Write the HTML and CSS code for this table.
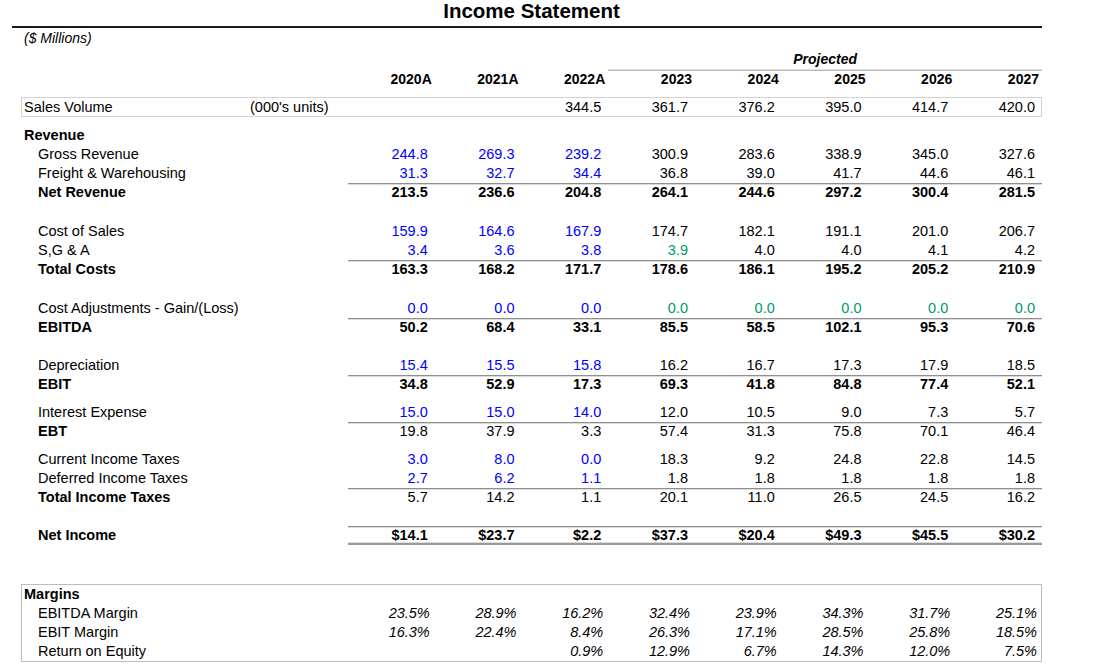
FILE: index.html
```html
<!DOCTYPE html>
<html>
<head>
<meta charset="utf-8">
<link rel="stylesheet" href="styles.css">
</head>
<body>
<div class="page">
  <div class="title">Income Statement</div>
  <div class="units">($ Millions)</div>
  <div class="table">
    <div class="row proj-row">
      <div class="projected">Projected</div>
    </div>
    <div class="row hdr">
      <div></div>
      <div class="h">2020A</div><div class="h">2021A</div><div class="h">2022A</div>
      <div class="h">2023</div><div class="h">2024</div><div class="h">2025</div><div class="h">2026</div><div class="h">2027</div>
    </div>
    <div class="row boxed vol">
      <div class="lbl"><span class="vol-name">Sales Volume</span><span>(000's units)</span></div>
      <div class="n"></div><div class="n"></div><div class="n">344.5</div>
      <div class="n">361.7</div><div class="n">376.2</div><div class="n">395.0</div><div class="n">414.7</div><div class="n">420.0</div>
    </div>

    <div class="row first">
      <div class="lbl bold">Revenue</div>
    </div>
    <div class="row">
      <div class="lbl ind">Gross Revenue</div>
      <div class="n b">244.8</div><div class="n b">269.3</div><div class="n b">239.2</div>
      <div class="n">300.9</div><div class="n">283.6</div><div class="n">338.9</div><div class="n">345.0</div><div class="n">327.6</div>
    </div>
    <div class="row">
      <div class="lbl ind">Freight &amp; Warehousing</div>
      <div class="n b">31.3</div><div class="n b">32.7</div><div class="n b">34.4</div>
      <div class="n">36.8</div><div class="n">39.0</div><div class="n">41.7</div><div class="n">44.6</div><div class="n">46.1</div>
    </div>
    <div class="row total bold">
      <div class="lbl ind">Net Revenue</div>
      <div class="n">213.5</div><div class="n">236.6</div><div class="n">204.8</div>
      <div class="n">264.1</div><div class="n">244.6</div><div class="n">297.2</div><div class="n">300.4</div><div class="n">281.5</div>
    </div>

    <div class="sp20"></div>
    <div class="row">
      <div class="lbl ind">Cost of Sales</div>
      <div class="n b">159.9</div><div class="n b">164.6</div><div class="n b">167.9</div>
      <div class="n">174.7</div><div class="n">182.1</div><div class="n">191.1</div><div class="n">201.0</div><div class="n">206.7</div>
    </div>
    <div class="row">
      <div class="lbl ind">S,G &amp; A</div>
      <div class="n b">3.4</div><div class="n b">3.6</div><div class="n b">3.8</div>
      <div class="n g">3.9</div><div class="n">4.0</div><div class="n">4.0</div><div class="n">4.1</div><div class="n">4.2</div>
    </div>
    <div class="row total bold">
      <div class="lbl ind">Total Costs</div>
      <div class="n">163.3</div><div class="n">168.2</div><div class="n">171.7</div>
      <div class="n">178.6</div><div class="n">186.1</div><div class="n">195.2</div><div class="n">205.2</div><div class="n">210.9</div>
    </div>

    <div class="sp20"></div>
    <div class="row">
      <div class="lbl ind">Cost Adjustments - Gain/(Loss)</div>
      <div class="n b">0.0</div><div class="n b">0.0</div><div class="n b">0.0</div>
      <div class="n g">0.0</div><div class="n g">0.0</div><div class="n g">0.0</div><div class="n g">0.0</div><div class="n g">0.0</div>
    </div>
    <div class="row total bold">
      <div class="lbl ind">EBITDA</div>
      <div class="n">50.2</div><div class="n">68.4</div><div class="n">33.1</div>
      <div class="n">85.5</div><div class="n">58.5</div><div class="n">102.1</div><div class="n">95.3</div><div class="n">70.6</div>
    </div>

    <div class="sp19"></div>
    <div class="row">
      <div class="lbl ind">Depreciation</div>
      <div class="n b">15.4</div><div class="n b">15.5</div><div class="n b">15.8</div>
      <div class="n">16.2</div><div class="n">16.7</div><div class="n">17.3</div><div class="n">17.9</div><div class="n">18.5</div>
    </div>
    <div class="row total bold">
      <div class="lbl ind">EBIT</div>
      <div class="n">34.8</div><div class="n">52.9</div><div class="n">17.3</div>
      <div class="n">69.3</div><div class="n">41.8</div><div class="n">84.8</div><div class="n">77.4</div><div class="n">52.1</div>
    </div>

    <div class="sp9"></div>
    <div class="row">
      <div class="lbl ind">Interest Expense</div>
      <div class="n b">15.0</div><div class="n b">15.0</div><div class="n b">14.0</div>
      <div class="n">12.0</div><div class="n">10.5</div><div class="n">9.0</div><div class="n">7.3</div><div class="n">5.7</div>
    </div>
    <div class="row total">
      <div class="lbl ind bold">EBT</div>
      <div class="n">19.8</div><div class="n">37.9</div><div class="n">3.3</div>
      <div class="n">57.4</div><div class="n">31.3</div><div class="n">75.8</div><div class="n">70.1</div><div class="n">46.4</div>
    </div>

    <div class="sp9"></div>
    <div class="row">
      <div class="lbl ind">Current Income Taxes</div>
      <div class="n b">3.0</div><div class="n b">8.0</div><div class="n b">0.0</div>
      <div class="n">18.3</div><div class="n">9.2</div><div class="n">24.8</div><div class="n">22.8</div><div class="n">14.5</div>
    </div>
    <div class="row">
      <div class="lbl ind">Deferred Income Taxes</div>
      <div class="n b">2.7</div><div class="n b">6.2</div><div class="n b">1.1</div>
      <div class="n">1.8</div><div class="n">1.8</div><div class="n">1.8</div><div class="n">1.8</div><div class="n">1.8</div>
    </div>
    <div class="row total">
      <div class="lbl ind bold">Total Income Taxes</div>
      <div class="n">5.7</div><div class="n">14.2</div><div class="n">1.1</div>
      <div class="n">20.1</div><div class="n">11.0</div><div class="n">26.5</div><div class="n">24.5</div><div class="n">16.2</div>
    </div>

    <div class="sp19"></div>
    <div class="row net bold">
      <div class="lbl ind">Net Income</div>
      <div class="n">$14.1</div><div class="n">$23.7</div><div class="n">$2.2</div>
      <div class="n">$37.3</div><div class="n">$20.4</div><div class="n">$49.3</div><div class="n">$45.5</div><div class="n">$30.2</div>
    </div>

    <div class="margins">
      <div class="row">
        <div class="lbl bold">Margins</div>
      </div>
      <div class="row">
        <div class="lbl ind">EBITDA Margin</div>
        <div class="n p">23.5%</div><div class="n p">28.9%</div><div class="n p">16.2%</div>
        <div class="n p">32.4%</div><div class="n p">23.9%</div><div class="n p">34.3%</div><div class="n p">31.7%</div><div class="n p">25.1%</div>
      </div>
      <div class="row">
        <div class="lbl ind">EBIT Margin</div>
        <div class="n p">16.3%</div><div class="n p">22.4%</div><div class="n p">8.4%</div>
        <div class="n p">26.3%</div><div class="n p">17.1%</div><div class="n p">28.5%</div><div class="n p">25.8%</div><div class="n p">18.5%</div>
      </div>
      <div class="row">
        <div class="lbl ind">Return on Equity</div>
        <div class="n p"></div><div class="n p"></div><div class="n p">0.9%</div>
        <div class="n p">12.9%</div><div class="n p">6.7%</div><div class="n p">14.3%</div><div class="n p">12.0%</div><div class="n p">7.5%</div>
      </div>
    </div>
  </div>
</div>
</body>
</html>
```

FILE: styles.css
```css
html, body {
  margin: 0;
  padding: 0;
  background: #ffffff;
}

body {
  font-family: "Liberation Sans", Arial, sans-serif;
  font-size: 14.5px;
  color: #000000;
}

.page {
  padding-left: 12px;
  width: 1030px;
}

.title {
  font-size: 20.5px;
  font-weight: bold;
  line-height: 22px;
  height: 22px;
  padding-bottom: 4px;
  padding-left: 9px;
  text-align: center;
  border-bottom: 2px solid #1a1a1a;
}

.units {
  font-style: italic;
  font-size: 14px;
  height: 20px;
  line-height: 19px;
  padding-left: 12px;
  margin-top: 1px;
}

.table {
  margin-left: 9px;
  width: 1021px;
}

.row {
  display: grid;
  grid-template-columns: 327px repeat(8, 1fr);
  height: 19px;
  line-height: 19px;
}

.proj-row {
  margin-top: 1px;
  height: 21px;
}

.projected {
  grid-column: 5 / 10;
  text-align: center;
  font-size: 14px;
  font-weight: bold;
  font-style: italic;
  box-shadow: inset 0 -1px 0 #b8b8b8, inset 0 -2px 0 #e2e2e2;
}

.hdr {
  height: 18px;
  line-height: 17px;
}

.h {
  text-align: right;
  font-size: 14px;
  font-weight: bold;
  padding-right: 3px;
}

.boxed {
  margin-top: 8px;
  height: 20px;
  line-height: 20px;
  outline: 1px solid #d2d2d2;
  outline-offset: -1px;
}

.vol .lbl {
  display: flex;
  padding-left: 3px;
}

.vol-name {
  width: 226px;
}

.first {
  margin-top: 9px;
}

.lbl {
  padding-left: 3px;
  white-space: nowrap;
}

.lbl.ind {
  padding-left: 17px;
}

.bold {
  font-weight: bold;
}

.n {
  text-align: right;
  padding-right: 7px;
  white-space: nowrap;
}

.b {
  color: #0000ff;
}

.g {
  color: #009a6a;
}

.p {
  font-style: italic;
  padding-right: 5px;
}

.total .n {
  box-shadow: inset 0 1px 0 #8f8f8f, inset 0 2px 0 #dadada;
}

.net .n {
  box-shadow: inset 0 1px 0 #8f8f8f, inset 0 2px 0 #dadada, inset 0 -2px 0 #999999, inset 0 -3px 0 #dddddd;
}

.sp19 {
  height: 19px;
}

.sp20 {
  height: 20px;
}

.sp9 {
  height: 9px;
}

.margins {
  margin-top: 39px;
  padding: 1px 0;
  outline: 1px solid #bdbdbd;
  outline-offset: -1px;
}
```
